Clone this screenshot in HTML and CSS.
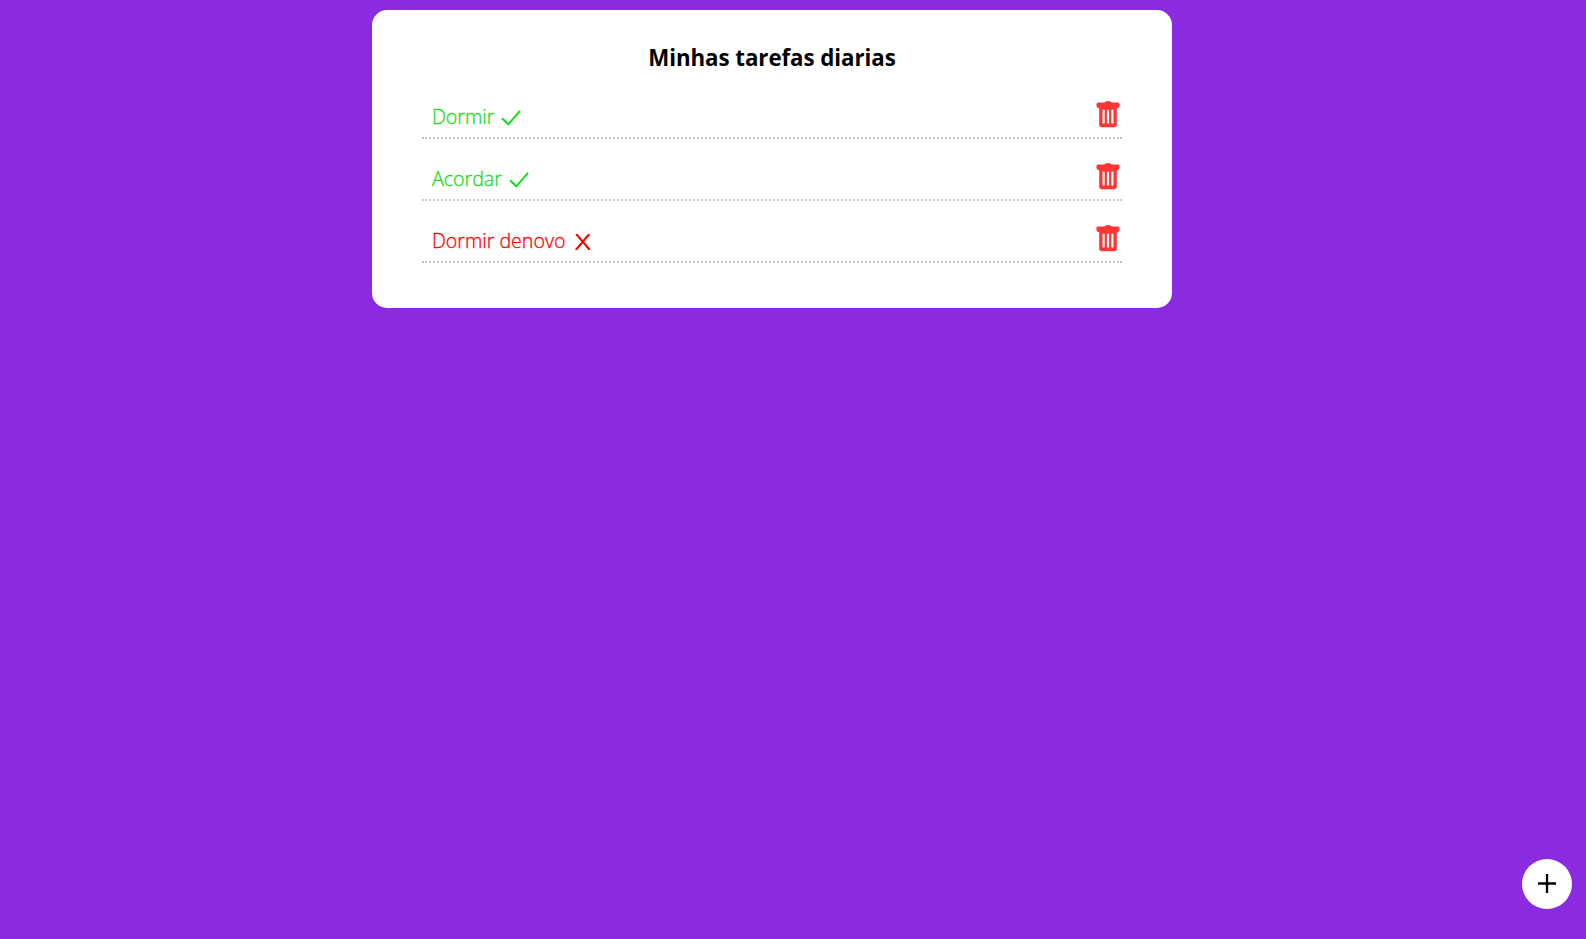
FILE: index.html
```html
<!DOCTYPE html>
<html lang="pt-BR">
<head>
<meta charset="utf-8">
<title>Minhas tarefas diarias</title>
<link rel="stylesheet" href="styles.css">
</head>
<body>
<svg class="sprite" width="0" height="0">
  <symbol id="check" viewBox="0 0 20 16"><path d="M1 8.2L7.3 14.3L19 .8" fill="none" stroke="currentColor" stroke-width="1.9"/></symbol>
  <symbol id="cross" viewBox="0 0 16 16"><path d="M1.200 0L14.800 16M14.300 0L.8 16" fill="none" stroke="currentColor" stroke-width="2.1"/></symbol>
  <symbol id="trash" viewBox="0 0 24 27"><path fill="currentColor" fill-rule="evenodd" d="M2 1.500H8.300Q9 0 12 0T15.700 1.500H22Q23.500 1.500 23.500 3V5Q23.500 7 21.500 7H20.800V23.500Q20.800 26.300 18 26.300H6Q3.200 26.300 3.200 23.500V7H2.500Q.5 7 .5 5V3Q.5 1.500 2 1.500ZM6.500 9.400V21.600Q6.500 22.800 7.600 22.800T8.700 21.600V9.400Q8.700 8.400 7.600 8.400T6.500 9.400ZM10.900 9.400V21.600Q10.900 22.800 12 22.800T13.100 21.600V9.400Q13.100 8.400 12 8.400T10.900 9.400ZM15.300 9.400V21.600Q15.300 22.800 16.400 22.800T17.500 21.600V9.400Q17.500 8.400 16.400 8.400T15.300 9.400Z"/></symbol>
</svg>
<main class="card">
  <h1 class="title">Minhas tarefas diarias</h1>
  <ul class="tasks">
    <li class="task done"><span class="label dormir">Dormir</span><svg class="check"><use href="#check"/></svg><button class="remove" aria-label="Remover"><svg><use href="#trash"/></svg></button></li>
    <li class="task done"><span class="label acordar">Acordar</span><svg class="check"><use href="#check"/></svg><button class="remove" aria-label="Remover"><svg><use href="#trash"/></svg></button></li>
    <li class="task pending"><span class="label denovo">Dormir denovo</span><svg class="cross"><use href="#cross"/></svg><button class="remove" aria-label="Remover"><svg><use href="#trash"/></svg></button></li>
  </ul>
</main>
<button class="add" aria-label="Adicionar"><svg viewBox="0 0 50 50"><path d="M16 24.500H34M25 15V34" stroke="#000" stroke-width="2.3"/></svg></button>
</body>
</html>
```
FILE: styles.css
```css
* { box-sizing: border-box; margin: 0; padding: 0; }
body { min-height: 100vh; padding-top: 10px; background: #8a2be2; font-family: "Open Sans", "Noto Sans", sans-serif; }
.sprite { position: absolute; }
.card { width: 800px; height: 298px; margin-left: 372px; padding: 30px 50px; background: #fff; border-radius: 15px; }
.title { font-size: 22.3px; line-height: 35px; height: 37px; font-weight: 700; letter-spacing: -.05px; text-align: center; white-space: nowrap; }
.tasks { list-style: none; }
.task { display: flex; height: 62px; padding: 0 2px 5px 10px; align-items: flex-end; border-bottom: 2px dotted #c8c8c8; }
.task.done { color: #16dc16; }
.task.pending { color: #f00; }
.label { font-size: 19.6px; font-weight: 300; line-height: 30px; -webkit-text-stroke: .3px currentColor; white-space: nowrap; }
.label.dormir { width: 69px; }
.label.acordar { width: 77px; }
.label.denovo { width: 143px; }
.check { width: 20px; height: 16px; margin-bottom: 6px; }
.cross { width: 16px; height: 16px; margin-bottom: 6px; }
.remove { width: 24px; height: 27px; margin: 0 0 4px auto; border: 0; background: none; color: #fc3535; }
.remove svg { display: block; width: 24px; height: 27px; }
.add { position: fixed; right: 14px; bottom: 30px; width: 50px; height: 50px; border: 0; border-radius: 50%; background: #fff; }
.add svg { display: block; width: 50px; height: 50px; }
```
